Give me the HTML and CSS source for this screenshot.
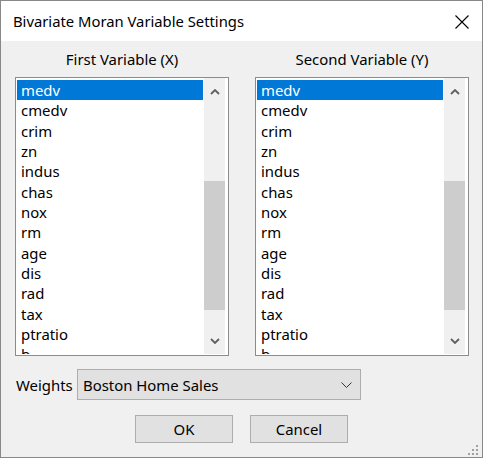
FILE: index.html
```html
<!DOCTYPE html>
<html>
<head>
<meta charset="utf-8">
<link rel="stylesheet" href="styles.css">
</head>
<body>
<div class="window">
  <div class="titlebar">
    <span class="title">Bivariate Moran Variable Settings</span>
    <svg class="close" width="14" height="14" viewBox="0 0 14 14"><path d="M0.5 0.5L13.5 13.5M13.5 0.5L0.5 13.5" stroke="#000" stroke-width="1.1" fill="none"/></svg>
  </div>
  <div class="content">
    <div class="columns">
      <div class="col">
        <div class="col-label">First Variable (X)</div>
        <div class="listbox">
          <ul class="items">
            <li class="sel">medv</li><li>cmedv</li><li>crim</li><li>zn</li><li>indus</li><li>chas</li><li>nox</li><li>rm</li><li>age</li><li>dis</li><li>rad</li><li>tax</li><li>ptratio</li><li>b</li>
          </ul>
          <div class="scrollbar">
            <div class="sb-btn"><svg width="10" height="6" viewBox="0 0 10 6"><path d="M1 5L5 1L9 5" stroke="#606060" stroke-width="1.8" fill="none"/></svg></div>
            <div class="sb-track"><div class="sb-thumb"></div></div>
            <div class="sb-btn"><svg width="10" height="6" viewBox="0 0 10 6"><path d="M1 1L5 5L9 1" stroke="#606060" stroke-width="1.8" fill="none"/></svg></div>
          </div>
        </div>
      </div>
      <div class="col">
        <div class="col-label">Second Variable (Y)</div>
        <div class="listbox">
          <ul class="items">
            <li class="sel">medv</li><li>cmedv</li><li>crim</li><li>zn</li><li>indus</li><li>chas</li><li>nox</li><li>rm</li><li>age</li><li>dis</li><li>rad</li><li>tax</li><li>ptratio</li><li>b</li>
          </ul>
          <div class="scrollbar">
            <div class="sb-btn"><svg width="10" height="6" viewBox="0 0 10 6"><path d="M1 5L5 1L9 5" stroke="#606060" stroke-width="1.8" fill="none"/></svg></div>
            <div class="sb-track"><div class="sb-thumb"></div></div>
            <div class="sb-btn"><svg width="10" height="6" viewBox="0 0 10 6"><path d="M1 1L5 5L9 1" stroke="#606060" stroke-width="1.8" fill="none"/></svg></div>
          </div>
        </div>
      </div>
    </div>
    <div class="weights-row">
      <span class="weights-label">Weights</span>
      <div class="combo">
        <span class="combo-text">Boston Home Sales</span>
        <svg class="combo-arrow" width="11" height="6" viewBox="0 0 11 6"><path d="M0.5 0.5L5.5 5.5L10.5 0.5" stroke="#333" stroke-width="1" fill="none"/></svg>
      </div>
    </div>
    <div class="buttons">
      <div class="btn">OK</div>
      <div class="btn">Cancel</div>
    </div>
    <svg class="grip" width="11" height="11" viewBox="0 0 11 11">
      <rect x="8" y="0" width="2" height="2" fill="#a0a0a0"/>
      <rect x="4" y="4" width="2" height="2" fill="#a0a0a0"/>
      <rect x="8" y="4" width="2" height="2" fill="#a0a0a0"/>
      <rect x="0" y="8" width="2" height="2" fill="#a0a0a0"/>
      <rect x="4" y="8" width="2" height="2" fill="#a0a0a0"/>
      <rect x="8" y="8" width="2" height="2" fill="#a0a0a0"/>
    </svg>
  </div>
</div>
</body>
</html>
```
FILE: styles.css
```css
* { box-sizing: border-box; }
html, body { margin: 0; padding: 0; background: #fff; }
body {
  font-family: "Noto Sans", "Open Sans", sans-serif;
  font-size: 14.9px;
  color: #000;
}
.window {
  width: 483px;
  height: 458px;
  border: 1px solid #888;
  display: flex;
  flex-direction: column;
  background: #f0f0f0;
}
.titlebar {
  height: 40px;
  background: #fff;
  display: flex;
  align-items: center;
  justify-content: space-between;
  padding: 0 13px 0 12px;
  flex: none;
}
.title {
  font-size: 14.8px;
  margin-top: -1px;
}
.close { display: block; margin-top: 1px; }
.content {
  flex: 1;
  position: relative;
  background: #f0f0f0;
}
.columns {
  display: grid;
  grid-template-columns: 214px 214px;
  column-gap: 26px;
  padding-left: 14px;
}
.col-label {
  height: 36px;
  line-height: 36px;
  text-align: center;
}
.listbox {
  height: 279px;
  border: 1px solid #8c8c8c;
  background: #fff;
  display: flex;
  padding: 0 3px 1px 1px;
}
.items {
  list-style: none;
  margin: 0;
  padding: 2px 0 0 0;
  width: 186px;
  overflow: hidden;
  flex: none;
}
.items li {
  height: 20.33px;
  line-height: 20px;
  padding-left: 4px;
  white-space: nowrap;
}
.items li.sel {
  background: #0078d7;
  color: #fff;
}
.scrollbar {
  width: 21px;
  margin-left: 1px;
  background: #f0f0f0;
  display: flex;
  flex-direction: column;
  flex: none;
}
.sb-btn {
  height: 27px;
  display: flex;
  align-items: center;
  justify-content: center;
  flex: none;
}
.sb-btn svg { display: block; }
.sb-track { flex: 1; }
.sb-thumb {
  margin-top: 76px;
  height: 129px;
  background: #cdcdcd;
}
.weights-row {
  display: flex;
  align-items: center;
  padding-left: 15px;
  margin-top: 13px;
}
.weights-label {
  width: 61px;
}
.combo {
  width: 284px;
  height: 31px;
  background: #e1e1e1;
  border: 1px solid #adadad;
  display: flex;
  align-items: center;
  justify-content: space-between;
  padding: 0 8px 0 5px;
}
.combo-arrow { display: block; }
.buttons {
  display: flex;
  justify-content: center;
  gap: 17px;
  margin-top: 15px;
}
.btn {
  width: 98px;
  height: 28px;
  background: #e1e1e1;
  border: 1px solid #adadad;
  display: flex;
  align-items: center;
  justify-content: center;
}
.grip {
  position: absolute;
  right: 3px;
  bottom: 1px;
}
```
